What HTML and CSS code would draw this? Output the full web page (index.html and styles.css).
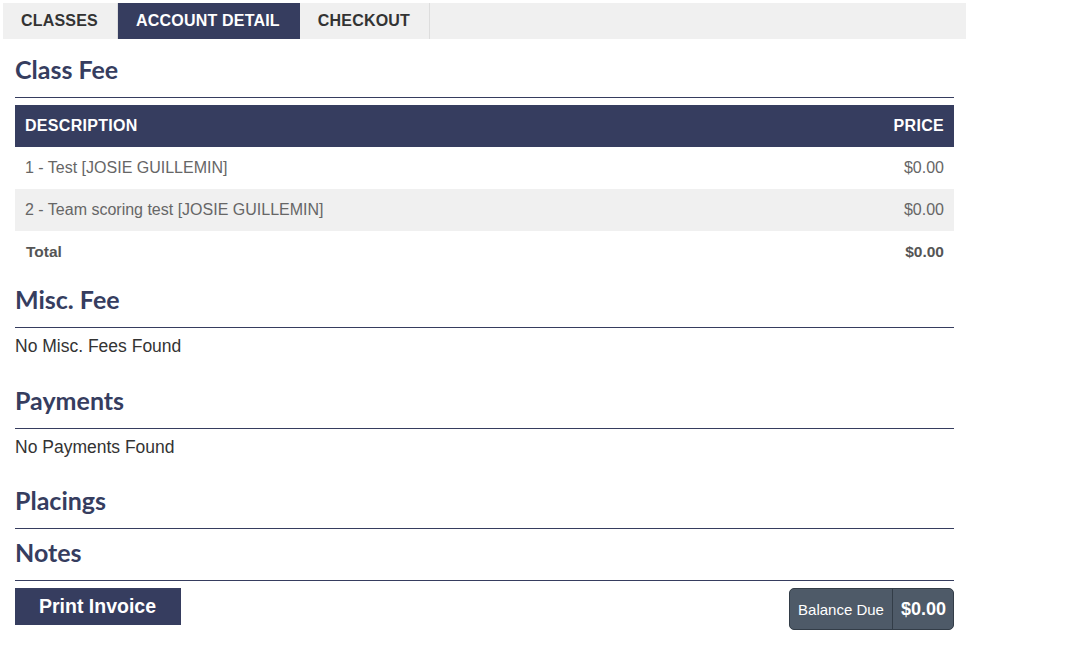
FILE: index.html
```html
<!DOCTYPE html>
<html lang="en">
<head>
  <meta charset="UTF-8" />
  <title>Account Detail</title>
  <link rel="stylesheet" href="styles.css">
</head>
<body>

  <div class="page">
    <!-- tabs -->
    <div class="tabs">
      <a class="tab">CLASSES</a>
      <a class="tab active">ACCOUNT DETAIL</a>
      <a class="tab">CHECKOUT</a>
    </div>

    <div class="content">
      <h2 class="section-title">Class Fee</h2>
      <table class="fee-table">
        <thead>
          <tr>
            <th>DESCRIPTION</th>
            <th class="price">PRICE</th>
          </tr>
        </thead>
        <tbody>
          <tr>
            <td>1 - Test [JOSIE GUILLEMIN]</td>
            <td class="price">$0.00</td>
          </tr>
          <tr class="alt">
            <td>2 - Team scoring test [JOSIE GUILLEMIN]</td>
            <td class="price">$0.00</td>
          </tr>
          <tr class="total">
            <td>Total</td>
            <td class="price">$0.00</td>
          </tr>
        </tbody>
      </table>

      <h2 class="section-title">Misc. Fee</h2>
      <p class="empty">No Misc. Fees Found</p>

      <h2 class="section-title">Payments</h2>
      <p class="empty">No Payments Found</p>

      <h2 class="section-title">Placings</h2>

      <h2 class="section-title">Notes</h2>

      <div class="footer">
        <button class="print-btn">Print Invoice</button>
        <div class="balance">
          <span class="balance-label">Balance Due</span>
          <span class="balance-value">$0.00</span>
        </div>
      </div>
    </div>
  </div>

</body>
</html>
```

FILE: styles.css
```css
html, body {
  margin: 0;
  padding: 0;
}

body {
  margin: 3px;
  font-family: 'Liberation Sans', Arial, sans-serif;
  color: #333;
  background: #fff;
}

.page {
  width: 963px;
}

.tabs {
  display: flex;
  background-color: #f0f0f0;
  height: 36px;
  margin-bottom: 7px;
}

.tab {
  display: flex;
  align-items: center;
  padding: 0 19px 0 18px;
  font-size: 16px;
  font-weight: bold;
  letter-spacing: 0.2px;
  color: #333;
  border-right: 1px solid #ddd;
}

.tab.active {
  background-color: #363d5f;
  color: #fff;
  border-right-color: #363d5f;
}

.content {
  padding: 0 12px;
}

.section-title {
  margin: 0;
  padding: 8px 0 13px;
  line-height: 30px;
  font-family: 'Lato', sans-serif;
  font-weight: bold;
  font-size: 25px;
  color: #363d5f;
  border-bottom: 1px solid #363d5f;
}

.fee-table {
  width: 100%;
  border-collapse: collapse;
  margin-top: 7px;
  margin-bottom: 3px;
  font-size: 16px;
}

.fee-table th {
  background-color: #363d5f;
  color: #fff;
  text-align: left;
  font-weight: bold;
  height: 42px;
  padding: 0 10px;
  letter-spacing: 0.3px;
}

.fee-table td {
  height: 42px;
  padding: 0 10px;
  color: #666;
}

.fee-table .price {
  text-align: right;
}

.fee-table tr.alt td {
  background-color: #f0f0f0;
}

.fee-table tr.total td {
  font-weight: bold;
  color: #555;
  font-size: 15.5px;
  padding-left: 11px;
}

.empty {
  margin: 0 0 19.5px;
  padding-top: 7px;
  line-height: 22px;
  font-size: 17.5px;
  color: #333;
}

.footer {
  display: flex;
  justify-content: space-between;
  align-items: flex-start;
  margin-top: 7px;
}

.print-btn {
  background-color: #363d5f;
  color: #fff;
  border: none;
  font-family: 'Liberation Sans', Arial, sans-serif;
  font-weight: bold;
  font-size: 19.5px;
  height: 37px;
  padding: 0 25px 0 24px;
  cursor: pointer;
}

.balance {
  display: flex;
  align-items: stretch;
  height: 40px;
  background-color: #4e5a68;
  border: 1px solid #333d48;
  border-radius: 5px;
  color: #fff;
}

.balance-label {
  display: flex;
  align-items: center;
  padding: 0 8px;
  font-size: 15px;
  border-right: 1px solid #333d48;
}

.balance-value {
  display: flex;
  align-items: center;
  padding: 0 7px 0 8px;
  font-size: 18px;
  font-weight: bold;
}
```
